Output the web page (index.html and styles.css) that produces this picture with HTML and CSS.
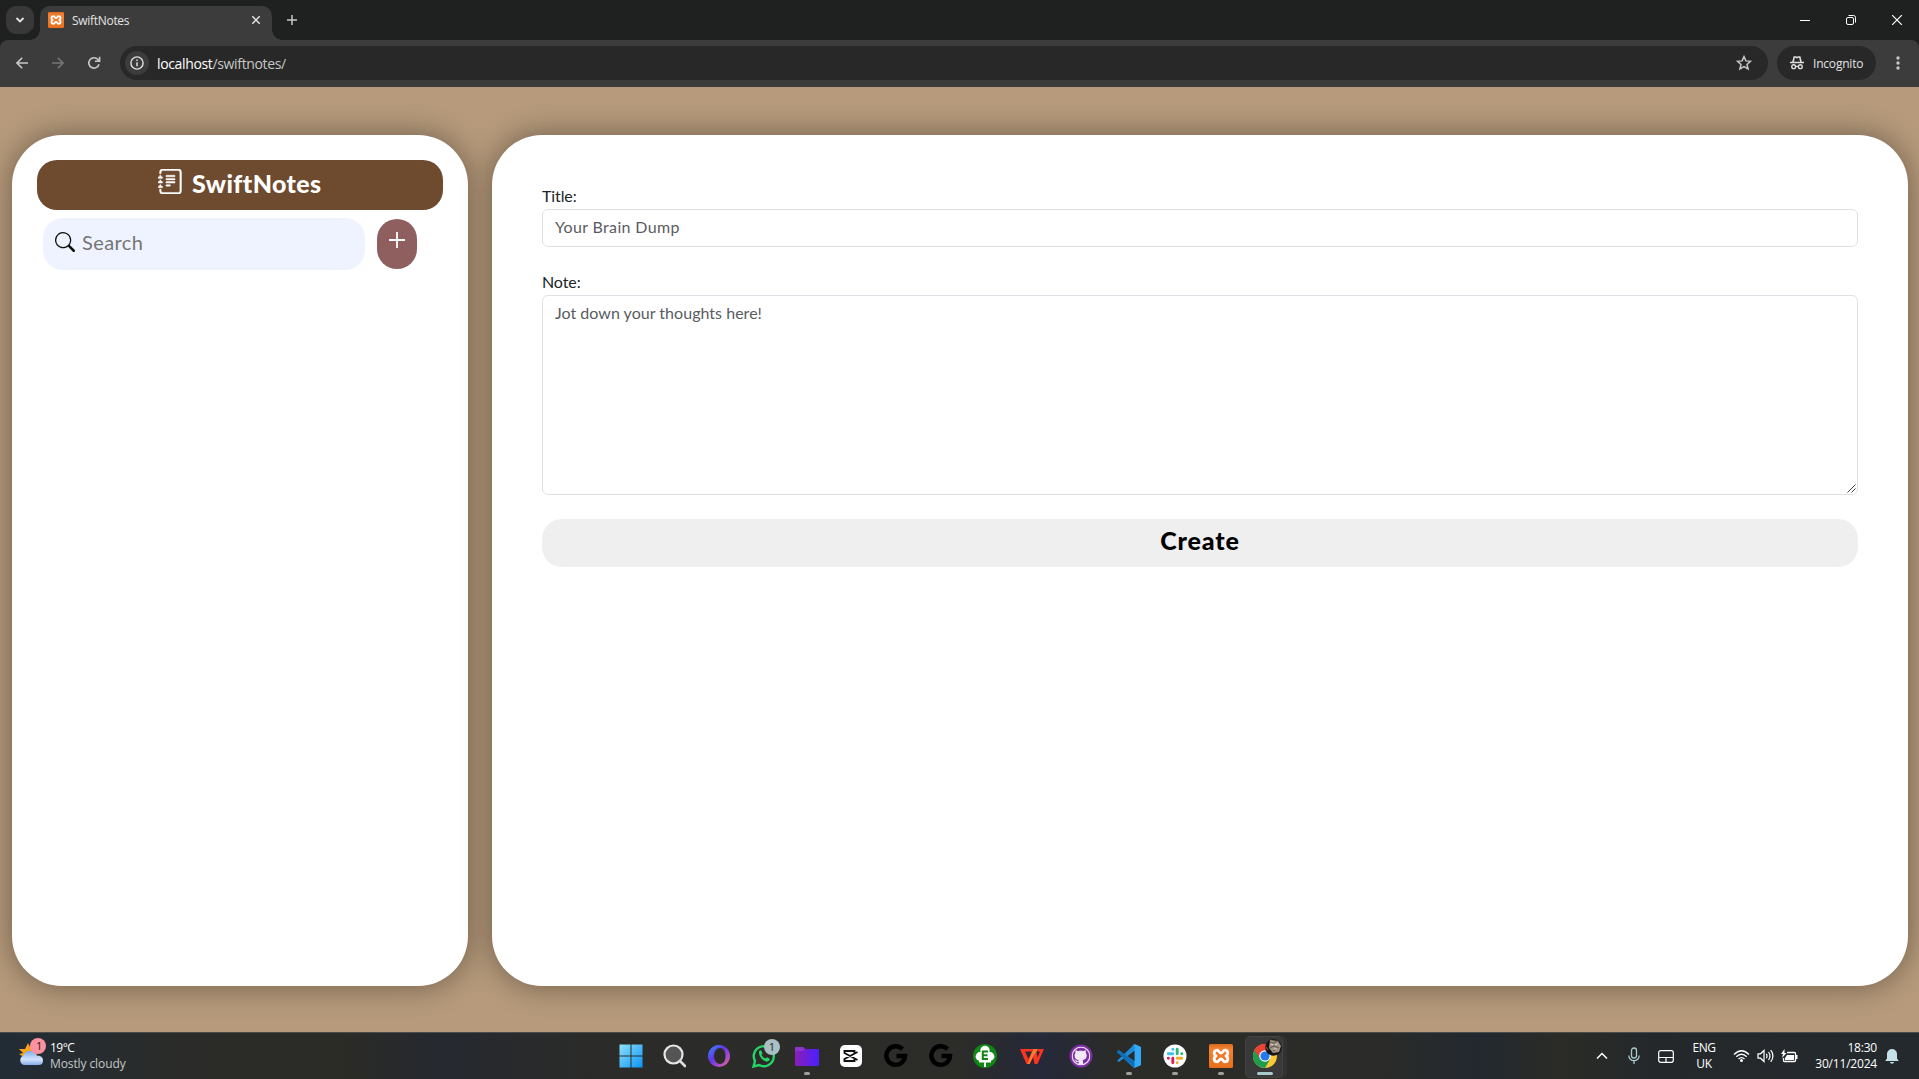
FILE: index.html
```html
<!DOCTYPE html>
<html lang="en">
<head>
<meta charset="utf-8">
<title>SwiftNotes</title>
<link rel="stylesheet" href="styles.css">
</head>
<body>
<svg width="0" height="0" class="defs">
  <defs>
    <linearGradient id="orange" x1="0" y1="0" x2="0" y2="1"><stop offset="0" stop-color="#d9691f"/><stop offset=".2" stop-color="#f58233"/><stop offset="1" stop-color="#e86f1c"/></linearGradient>
    <linearGradient id="win" x1="0" y1="0" x2="1" y2="1"><stop offset="0" stop-color="#8fe0fb"/><stop offset="1" stop-color="#0a94f5"/></linearGradient>
    <linearGradient id="opera" x1="0" y1="0" x2="1" y2="1"><stop offset="0" stop-color="#2d9cff"/><stop offset=".4" stop-color="#6236e8"/><stop offset=".7" stop-color="#a54bd0"/><stop offset="1" stop-color="#ff6a6a"/></linearGradient>
    <linearGradient id="folder" x1="0" y1="0" x2="1" y2="0"><stop offset="0" stop-color="#8a1fb5"/><stop offset="1" stop-color="#4b1fff"/></linearGradient>
    <linearGradient id="cloud" x1="0" y1="0" x2="0" y2="1"><stop offset="0" stop-color="#7ea9ee"/><stop offset=".6" stop-color="#d3e4fc"/><stop offset="1" stop-color="#86aceb"/></linearGradient>
    <symbol id="xampp" viewBox="0 0 24 24"><rect width="24" height="24" rx="1.500" fill="url(#orange)"/><path d="M8.200 6.200C9.800 6.200 10 9 12 9s2.200-2.800 3.800-2.800c3.600 0 3.900 4.300 1.200 5.800 2.700 1.500 2.400 5.800-1.200 5.800C14.200 17.800 14 15 12 15s-2.200 2.800-3.800 2.800c-3.600 0-3.900-4.300-1.200-5.800-2.700-1.500-2.400-5.800 1.200-5.800z" fill="none" stroke="#fff" stroke-width="2.800" stroke-linejoin="round"/></symbol>
    <symbol id="gmark" viewBox="0 0 24 24"><path d="M18.500 5.200A9.300 9.300 0 1 0 21 12H12.500" fill="none" stroke="#000" stroke-width="4.400"/></symbol>
  </defs>
</svg>

<header class="tabs">
  <span class="tab-search"><svg width="10" height="10" viewBox="0 0 10 10"><path d="M1.500 3l3.500 3.500L8.500 3" fill="none" stroke="#e3e3e3" stroke-width="1.800"/></svg></span>
  <div class="tab">
    <svg width="16" height="16"><use href="#xampp"/></svg>
    <span class="tab-title">SwiftNotes</span>
    <svg class="tab-close" width="10" height="10" viewBox="0 0 10 10"><path d="M1.300 1.300l7.400 7.400M8.700 1.300L1.300 8.700" stroke="#e3e3e3" stroke-width="1.500"/></svg>
  </div>
  <svg class="tab-new" width="12" height="12" viewBox="0 0 12 12"><path d="M6 1v10M1 6h10" stroke="#c7c7c7" stroke-width="1.500"/></svg>
  <div class="window-buttons">
    <svg width="10" height="12" viewBox="0 0 10 12"><path d="M0 5.500h10" stroke="#fff"/></svg>
    <svg width="10" height="10" viewBox="0 0 10 10"><path d="M2.500.5H7.500Q9.500.5 9.500 2.500V7.500" fill="none" stroke="#fff"/><rect x=".5" y="2.500" width="7" height="7" rx="1.500" fill="none" stroke="#fff"/></svg>
    <svg width="10" height="10" viewBox="0 0 10 10"><path d="M0 0l10 10M10 0L0 10" stroke="#fff" stroke-width="1.200"/></svg>
  </div>
</header>

<div class="toolbar-back">
<nav class="toolbar">
  <svg class="nav-back" width="12" height="12" viewBox="0 0 12 12"><path d="M12 6H1.200M6.200 .8L1 6l5.200 5.200" fill="none" stroke="#c7c7c7" stroke-width="1.600"/></svg>
  <svg class="nav-forward" width="12" height="12" viewBox="0 0 12 12"><path d="M0 6h10.800M5.800 .8L11 6l-5.200 5.200" fill="none" stroke="#757575" stroke-width="1.600"/></svg>
  <svg class="nav-reload" width="14" height="14" viewBox="0 0 14 14"><path d="M12 8.200A5.200 5.200 0 1 1 11 3.600L12.500 5.200M12.600 .8V5.300H8" fill="none" stroke="#c7c7c7" stroke-width="1.600"/></svg>
  <div class="address">
    <span class="site-info"><svg width="14" height="14" viewBox="0 0 14 14"><circle cx="7" cy="7" r="6.100" fill="none" stroke="#dedede" stroke-width="1.400"/><path d="M7 6.200v4.100M7 3.500v1.600" stroke="#dedede" stroke-width="1.500"/></svg></span>
    <span class="url">localhost<span class="path">/swiftnotes/</span></span>
    <svg class="star" width="16" height="16" viewBox="0 0 16 16"><path d="M8 1.600l1.900 4.300 4.700.4-3.600 3.100 1.100 4.600L8 11.600 3.900 14 5 9.400 1.400 6.300l4.700-.4z" fill="none" stroke="#c7c7c7" stroke-width="1.500"/></svg>
  </div>
  <div class="incognito">
    <svg width="14" height="14" viewBox="0 0 14 14"><path d="M3 6L4.200 1h1.600l1.200.6L8.200 1h1.600L11 6M0 6.500h14" fill="none" stroke="#dedede" stroke-width="1.600"/><circle cx="3.700" cy="10.700" r="1.900" fill="none" stroke="#dedede" stroke-width="1.400"/><circle cx="10.300" cy="10.700" r="1.900" fill="none" stroke="#dedede" stroke-width="1.400"/><path d="M5.600 10.400h2.800" stroke="#dedede" stroke-width="1.200"/></svg>
    <span>Incognito</span>
  </div>
  <svg class="menu" width="4" height="14" viewBox="0 0 4 14"><g fill="#c7c7c7"><circle cx="2" cy="2" r="1.700"/><circle cx="2" cy="7" r="1.700"/><circle cx="2" cy="12" r="1.700"/></g></svg>
</nav>
</div>

<main class="page">
  <aside class="panel sidebar">
    <h1 class="brand">
      <svg width="25" height="25" viewBox="0 0 16 16" fill="#fff"><path d="M5 10.500a.5.5 0 0 1 .5-.5h2a.5.5 0 0 1 0 1h-2a.5.5 0 0 1-.5-.5m0-2a.5.5 0 0 1 .5-.5h5a.5.5 0 0 1 0 1h-5a.5.5 0 0 1-.5-.5m0-2a.5.5 0 0 1 .5-.5h5a.5.5 0 0 1 0 1h-5a.5.5 0 0 1-.5-.5m0-2a.5.5 0 0 1 .5-.5h5a.5.5 0 0 1 0 1h-5a.5.5 0 0 1-.5-.5" stroke="#fff" stroke-width=".3"/><path d="M3 0h10a2 2 0 0 1 2 2v12a2 2 0 0 1-2 2H3a2 2 0 0 1-2-2v-1h1v1a1 1 0 0 0 1 1h10a1 1 0 0 0 1-1V2a1 1 0 0 0-1-1H3a1 1 0 0 0-1 1v1H1V2a2 2 0 0 1 2-2" stroke="#fff" stroke-width=".3"/><path d="M1 5v-.5a.5.5 0 0 1 1 0V5h.5a.5.5 0 0 1 0 1h-2a.5.5 0 0 1 0-1zm0 3v-.5a.5.5 0 0 1 1 0V8h.5a.5.5 0 0 1 0 1h-2a.5.5 0 0 1 0-1zm0 3v-.5a.5.5 0 0 1 1 0v.5h.5a.5.5 0 0 1 0 1h-2a.5.5 0 0 1 0-1z" stroke="#fff" stroke-width=".3"/></svg>
      <span>SwiftNotes</span>
    </h1>
    <div class="search-row">
      <div class="search">
        <svg width="20" height="20" viewBox="0 0 16 16" fill="#111"><path d="M11.742 10.344a6.500 6.500 0 1 0-1.397 1.398h-.001q.044.060.098.115l3.850 3.850a1 1 0 0 0 1.415-1.414l-3.850-3.850a1 1 0 0 0-.115-.1zM12 6.500a5.500 5.500 0 1 1-11 0 5.500 5.500 0 0 1 11 0"/></svg>
        <span>Search</span>
      </div>
      <div class="add"><svg width="16" height="16" viewBox="0 0 16 16"><path d="M8 .5v15M.5 8h15" stroke="#fff" stroke-width="1.800" stroke-linecap="round"/></svg></div>
    </div>
  </aside>
  <section class="panel editor">
    <label class="label title-label">Title:</label>
    <div class="field"><span class="ph-title">Your Brain Dump</span></div>
    <label class="label note-label">Note:</label>
    <div class="field area"><span class="ph-note">Jot down your thoughts here!</span>
      <svg class="grip" width="9" height="9" viewBox="0 0 9 9"><path d="M.5 8.500l8-8M4.500 8.500l4-4" stroke="#444" stroke-width="1"/></svg>
    </div>
    <div class="create"><span>Create</span></div>
  </section>
</main>

<footer class="taskbar">
  <div class="weather">
    <svg width="30" height="30" viewBox="0 0 30 30"><path d="M10 5l2 4 5-2 2 12-10 2-8-5 4-1-4-4 6 0z" fill="#f6a21c"/><path d="M6 27a5 5 0 0 1-.5-9.500Q8 12 13 13q4 .5 5.500 4.500Q25 17.500 25 22.500 25 27 20.500 27z" fill="url(#cloud)"/><circle cx="20" cy="8" r="8" fill="#fc919f"/><text x="18" y="12.300" class="badge-text">1</text></svg>
    <div class="weather-text"><div class="temp">19°C</div><div class="cond">Mostly cloudy</div></div>
  </div>
  <div class="apps">
    <span class="app"><svg viewBox="0 0 24 24"><path d="M.5.5h11v11H.5zM12.500.5h11v11h-11zM.5 12.500h11v11H.5zM12.500 12.500h11v11h-11z" fill="url(#win)"/></svg></span>
    <span class="app"><svg viewBox="0 0 24 24"><circle cx="11.500" cy="10.500" r="9" fill="#555" stroke="#e6e6e6" stroke-width="2.200"/><path d="M18 17l5 5" stroke="#ddd" stroke-width="2.600" stroke-linecap="round"/></svg></span>
    <span class="app opera"><svg viewBox="0 0 24 24"><path d="M12 1a11 11 0 1 0 .01 0zM13 4c4 0 5.500 4 5.500 8s-1.500 8-5.500 8-6-4-6-8 2-8 6-8z" fill-rule="evenodd" fill="url(#opera)"/></svg></span>
    <span class="app"><svg viewBox="0 0 24 24"><path d="M1.500 22.500L3 17A10 10 0 1 1 7 21z" fill="none" stroke="#25d366" stroke-width="2.400"/><path d="M7 7.500q1.500-2 2.500-.5l1 2.500-1 1.500q1.500 2.500 4 3.500l1.500-1.200 2.700 1.400q.5 2.500-3 3C11 17 6.500 12.500 7 7.500z" fill="#25d366"/></svg><b class="badge">1</b></span>
    <span class="app run"><svg viewBox="0 0 24 24"><path d="M0 4q0-1 1-1h7l2 2h13q1 0 1 1v15q0 1-1 1H1q-1 0-1-1z" fill="url(#folder)"/><path d="M0 6V4q0-1 1-1h7l2 2-2 2H0z" fill="#8e35cc"/></svg></span>
    <span class="app"><svg viewBox="0 0 24 24"><rect x="1" y="1" width="22" height="22" rx="5" fill="#fff"/><path d="M18.500 8l-13 7v2h10v-2M18.500 16l-13-7V7h10v2" fill="none" stroke="#111" stroke-width="1.900"/></svg></span>
    <span class="app g"><svg><use href="#gmark"/></svg></span>
    <span class="app g"><svg><use href="#gmark"/></svg></span>
    <span class="app tree"><svg viewBox="0 0 24 24"><circle cx="12" cy="12" r="12" fill="#118516"/><g fill="#fff"><circle cx="12" cy="6.500" r="4.700"/><circle cx="7" cy="12.500" r="4.400"/><circle cx="17" cy="12.500" r="4.400"/><path d="M6 12h12v6.500h-5V23h-2v-4.500H6z"/></g><path d="M15 7.500H9.800v7.500H15M9.800 11.200h4.700" fill="none" stroke="#118516" stroke-width="2"/></svg></span>
    <span class="app"><svg viewBox="0 0 24 24"><path d="M0 5h14.500L13 7.500H5L8.500 15 13.200 5H18L16.500 8l1 5.500L20 7.500h-2.500L18.500 5H24l-6.500 15h-3l-1.500-7-3.500 7h-3z" fill="#fb3421" fill-rule="evenodd"/><path d="M13.200 5H18l-5 8-3.500 7H7.500z" fill="#ff7a2e"/></svg></span>
    <span class="app"><svg viewBox="0 0 24 24"><circle cx="12" cy="12" r="11.500" fill="#7b2fa0"/><svg x="2.500" y="2.500" width="19" height="19" viewBox="0 0 16 16"><path d="M8 0C3.580 0 0 3.580 0 8c0 3.540 2.290 6.530 5.470 7.590.4.070.55-.17.55-.38 0-.19-.01-.82-.01-1.490-2.010.37-2.530-.49-2.690-.94-.09-.23-.48-.94-.82-1.130-.28-.15-.68-.52-.01-.53.63-.01 1.080.58 1.230.82.72 1.210 1.870.87 2.330.66.07-.52.28-.87.51-1.070-1.780-.2-3.640-.89-3.640-3.950 0-.87.31-1.590.82-2.150-.08-.2-.36-1.020.08-2.120 0 0 .67-.21 2.200.82.64-.18 1.320-.27 2-.27s1.360.09 2 .27c1.530-1.040 2.200-.82 2.200-.82.44 1.100.16 1.920.08 2.120.51.56.82 1.270.82 2.150 0 3.070-1.870 3.750-3.650 3.950.29.25.54.73.54 1.480 0 1.070-.01 1.930-.01 2.200 0 .21.15.46.55.38A8.010 8.010 0 0 0 16 8c0-4.420-3.580-8-8-8" fill="none" stroke="#f1e8f5" stroke-width="0"/><circle cx="8" cy="8" r="7.400" fill="none" stroke="#eadcf1" stroke-width="1"/><path d="M6 15.200v-2.300c-2 .4-2.500-.5-2.700-1-.2-.4-.5-.8-.8-1 1.500-.3 1.700 1.200 2.800 1.300.4 0 .7-.3.9-.9-1.800-.2-3.600-.9-3.600-4 0-.8.300-1.500.8-2.100-.1-.3-.3-1.100.1-2.100 0 0 .7-.2 2.200.8 1.300-.3 2.700-.3 4 0 1.500-1 2.200-.8 2.200-.8.4 1 .2 1.800.1 2.100.5.600.8 1.300.8 2.100 0 3.100-1.900 3.800-3.600 4 .3.200.5.700.5 1.500v2.400z" fill="#f1e8f5"/></svg></svg></span>
    <span class="app run"><svg viewBox="0 0 24 24"><path d="M17 0l7 3v18l-7 3L6.500 14.500 2 18 0 16.700 13.500 4z" fill="#1f8ad6"/><path d="M0 7.300L2 6l16 12v6L0 8.500z" fill="#0d6fb8"/><path d="M17.500 0L24 3v18l-6.500 3z" fill="#32a9f4"/><path d="M17.500 6.700v10.600L10.500 12z" fill="#2a2c2a"/></svg></span>
    <span class="app run"><svg viewBox="0 0 24 24"><circle cx="12" cy="12" r="11.500" fill="#fff"/><g fill="none" stroke-width="2.900" stroke-linecap="round"><path d="M5.200 9.700h4.600M9.800 5.300v.1" stroke="#36c5f0"/><path d="M14.200 5.200v4.600M18.700 9.800h.1" stroke="#2eb67d"/><path d="M9.800 14.200v4.600M5.300 14.200h.1" stroke="#e01e5a"/><path d="M14.200 14.300h4.600M14.200 18.700v.1" stroke="#ecb22e"/></g></svg></span>
    <span class="app run"><svg><use href="#xampp"/></svg></span>
    <span class="app active"><svg viewBox="0 0 24 24"><circle cx="12" cy="12" r="12" fill="#fcc934"/><path d="M12 12L1.600 6A12 12 0 0 1 22.400 6z" fill="#ea4335"/><path d="M1.600 6A12 12 0 0 0 12 24L17.200 15 12 12z" fill="#1e9e4c"/><path d="M12 6.500h10.700A12 12 0 0 0 1.600 6L6.800 15z" fill="#ea4335"/><circle cx="12" cy="12" r="5.800" fill="#fff"/><circle cx="12" cy="12" r="4.600" fill="#2379f0"/></svg>
      <svg class="avatar" width="17" height="17" viewBox="0 0 17 17"><circle cx="8.500" cy="8.500" r="8.300" fill="#171412"/><path d="M5 1l8 1 3 5-2 6-6 1-4-5z" fill="#a19589"/><path d="M5 3l4 1 3-2M5 9l4-2 5 2M8 12l4-2M1 8l2 3" stroke="#6b5c52" fill="none" stroke-width="1.200"/><path d="M6 5l2 1M10 6l2-1M9 10h3" stroke="#e5dcd1"/></svg>
    </span>
  </div>
  <div class="tray">
    <svg width="12" height="12" viewBox="0 0 12 12"><path d="M1 8.500l5-5 5 5" fill="none" stroke="#fff" stroke-width="1.500"/></svg>
    <svg class="mic" width="12" height="18" viewBox="0 0 12 18"><rect x="3.500" y="1" width="5" height="10" rx="2.500" fill="none" stroke="#a9c9cc" stroke-width="1.300"/><path d="M.8 8.500a5.200 5.200 0 0 0 10.400 0M6 14v3" fill="none" stroke="#a9c9cc" stroke-width="1.300"/></svg>
    <svg class="pad" width="16" height="13" viewBox="0 0 16 13"><rect x=".7" y=".7" width="14.600" height="11.600" rx="2" fill="none" stroke="#fff" stroke-width="1.200"/><path d="M1 7.500h14M8 7.500V12" stroke="#fff" stroke-width="1.200"/></svg>
    <div class="lang"><div>ENG</div><div>UK</div></div>
    <svg class="wifi" width="17" height="14" viewBox="0 0 17 14"><path d="M1 5.500q7.500-7.500 15 0M3.300 7.800q5.200-5 10.400 0M5.500 10q3-2.700 6 0" fill="none" stroke="#fff" stroke-width="1.300"/><circle cx="8.500" cy="11.500" r="1.500" fill="#fff"/></svg>
    <svg class="sound" width="17" height="14" viewBox="0 0 17 14"><path d="M1 4.800h2.500L7 1.500v11L3.500 9.200H1z" fill="none" stroke="#fff" stroke-width="1.200"/><path d="M9.300 4.800q1.500 2.200 0 4.400M11.500 3q3 4 0 8M13.700 1.200q4.500 5.800 0 11.600" fill="none" stroke="#fff" stroke-width="1.200"/></svg>
    <svg class="battery" width="17" height="14" viewBox="0 0 17 14"><path d="M6 3.500h7.500q1 0 1 1v7q0 1-1 1h-10q-1 0-1-1V9" fill="none" stroke="#fff" stroke-width="1.300"/><path d="M6 6h7v5H4V9zM15 6h1.500v4H15zM3.500 0L0 5h2L1 9l4.500-5h-2z" fill="#fff"/></svg>
    <div class="clock"><div class="time">18:30</div><div class="date">30/11/2024</div></div>
    <svg class="bell" width="14" height="16" viewBox="0 0 14 16"><path d="M2 10.500V6a5 5 0 0 1 10 0v4.500l1.500 2v.5H.5v-.5zM4.800 14h4.400Q8.500 15.700 7 15.700T4.800 14z" fill="#c4e3e8"/></svg>
  </div>
</footer>
</body>
</html>
```
FILE: styles.css
```css
* { box-sizing: border-box; }
body {
  margin: 0;
  width: 1919px;
  height: 1079px;
  overflow: hidden;
  display: flex;
  flex-direction: column;
  background: #b69a7b;
  font-family: "Open Sans", "Noto Sans", sans-serif;
  color: #fff;
}
svg { display: block; flex: none; }
.defs { position: absolute; }

/* browser frame */
.tabs {
  height: 40px;
  flex: none;
  display: flex;
  align-items: flex-start;
  background: #1f2120;
  padding-left: 6px;
}
.tab-search {
  width: 28px;
  height: 28px;
  margin-top: 6px;
  border-radius: 10px;
  background: #383838;
  display: grid;
  place-items: center;
}
.tab {
  width: 232px;
  height: 34px;
  margin: 6px 0 0 6px;
  padding: 0 11px 6px 8px;
  border-radius: 10px 10px 0 0;
  background: #3c3c3c;
  display: flex;
  align-items: center;
  position: relative;
}
.tab::before, .tab::after {
  content: "";
  position: absolute;
  bottom: 0;
  width: 10px;
  height: 10px;
}
.tab::before { left: -10px; background: radial-gradient(circle at 0 0, #1f2120 9.5px, #3c3c3c 10px); }
.tab::after { right: -10px; background: radial-gradient(circle at 100% 0, #1f2120 9.5px, #3c3c3c 10px); }
.tab-title { margin-left: 8px; font-size: 12px; letter-spacing: -.3px; color: #e3e3e3; }
.tab-close { margin-left: auto; }
.tab-new { margin: 14px 0 0 14px; }
.window-buttons { margin: 15px 17px 0 auto; display: flex; gap: 36px; }
.toolbar-back { flex: none; background: #1f2120; }
.toolbar {
  height: 47px;
  display: flex;
  align-items: center;
  padding: 0 19px 1px 16px;
  border-radius: 8px 8px 0 0;
  background: #3c3c3c;
}
.nav-forward { margin-left: 24px; }
.nav-reload { margin-left: 23px; }
.address {
  flex: 1;
  height: 34px;
  margin-left: 19px;
  padding: 0 16px 0 5px;
  border-radius: 17px;
  background: #282828;
  display: flex;
  align-items: center;
}
.site-info {
  width: 24px;
  height: 24px;
  border-radius: 50%;
  background: #3c3c3c;
  display: grid;
  place-items: center;
}
.url { margin-left: 8px; font-size: 14px; letter-spacing: -.35px; color: #fff; }
.path { color: #c7c7c7; }
.star { margin-left: auto; }
.incognito {
  width: 99px;
  height: 34px;
  margin: 0 20px 0 9px;
  padding-left: 13px;
  border-radius: 17px;
  background: #282828;
  display: flex;
  align-items: center;
  gap: 9px;
  font-size: 12px;
  letter-spacing: -.2px;
  color: #e3e3e3;
}

/* notes app */
.page {
  height: 945px;
  flex: none;
  display: flex;
  gap: 24px;
  padding: 48px 11px 46px 12px;
  font-family: Lato, sans-serif;
  background: #b69a7b;
}
.panel { background: #fff; border-radius: 50px; box-shadow: 0 0 30px rgba(0, 0, 0, .4); }
.sidebar { width: 456px; padding: 25px; }
.brand {
  margin: 0;
  height: 50px;
  border-radius: 20px;
  background: #6e4a2f;
  display: flex;
  padding: 9px 0 0 121px;
  gap: 9px;
  font-size: 25px;
  letter-spacing: .4px;
  line-height: 28px;
  font-weight: 900;
}
.search-row { display: flex; gap: 12px; padding: 8px 0 0 6px; }
.search {
  width: 322px;
  height: 52px;
  border-radius: 20px;
  background: #eff3ff;
  display: flex;
  gap: 7px;
  padding: 14px 0 0 12px;
  font-size: 20px;
  letter-spacing: .4px;
  line-height: 21px;
  color: #757575;
}
.add {
  width: 40px;
  height: 50px;
  margin-top: 1px;
  padding: 13px 0 0 12px;
  border-radius: 20px;
  background: #8f5f60;
}
.editor { flex: 1; padding: 50px 50px 0; }
.label { display: block; height: 24px; font-size: 16px; letter-spacing: -.1px; line-height: 21px; color: #212529; }
.field {
  height: 38px;
  border: 1px solid #dee2e6;
  border-radius: 6px;
  padding: 6px 12px;
  font-size: 16px;
  line-height: 22px;
  color: #595c5f;
  position: relative;
}
.note-label { margin-top: 24px; }
.area { height: 200px; }
.grip { position: absolute; right: 1px; bottom: 1px; }
.ph-title { letter-spacing: .35px; }
.ph-note { letter-spacing: .03px; }
.create {
  height: 48px;
  margin-top: 24px;
  border-radius: 20px;
  background: #efefef;
  color: #000;
  text-align: center;
  font-size: 25px;
  letter-spacing: .9px;
  line-height: 43px;
  font-weight: 900;
}

/* taskbar */
.taskbar {
  height: 47px;
  flex: none;
  display: flex;
  border-top: 1px solid #4a4c4c;
  background: linear-gradient(90deg, #222c35 0, #2b2c29 180px, #2b2c26 340px, #25282f 440px, #2b2c29 600px, #2c2c29 960px, #25293a 1040px, #2b2c27 1120px, #2b2c29 1380px, #22282f 1480px, #2b2c26 1560px, #24282b 1650px, #24292d 1919px);
}
.weather { width: 619px; padding: 5px 0 0 18px; display: flex; gap: 2px; }
.badge-text { font-size: 11px; fill: #222; }
.weather-text { font-size: 12px; line-height: 16px; padding-top: 2px; }
.temp { letter-spacing: -.5px; }
.cond { color: #c5c7c8; letter-spacing: -.1px; }
.apps {
  display: grid;
  grid-template-columns: 43px 44px 46px 43px 44px 44px 45px 46px 46px 49px 48px 46px 46px 44px 24px;
  padding-top: 11px;
}
.app { position: relative; width: 24px; height: 34px; }
.app > svg:first-child { width: 24px; height: 24px; position: relative; }
.opera, .g { margin-left: 1px; }
.tree { margin-left: -1px; }
.run::after, .active::after {
  content: "";
  position: absolute;
  left: 9px;
  top: 28px;
  width: 6px;
  height: 3px;
  border-radius: 2px;
  background: #a0a0a0;
}
.active::after { left: 4px; width: 16px; background: #a9c9d0; }
.active::before {
  content: "";
  position: absolute;
  left: -8px;
  top: -8px;
  width: 36px;
  height: 40px;
  border-radius: 5px;
  background: #383938;
  border: 1px solid #424342;
  box-shadow: 4px 0 0 #313231;
}
.avatar { position: absolute; left: 12px; top: -5px; }
.badge {
  position: absolute;
  left: 12px;
  top: -5px;
  width: 16px;
  height: 16px;
  border-radius: 50%;
  background: #a9bfc5;
  color: #222;
  font: 11px/16px "Open Sans", sans-serif;
  text-align: center;
}
.tray { flex: 1; display: flex; align-items: center; padding-left: 319px; font-size: 12px; line-height: 16px; }
.mic { margin-left: 20px; }
.pad { margin-left: 18px; }
.lang { width: 40px; margin-left: 10px; text-align: center; letter-spacing: -.4px; }
.wifi { margin-left: 9px; }
.sound { margin-left: 7px; }
.battery { margin-left: 7px; }
.clock { margin-left: auto; text-align: right; letter-spacing: -.2px; }
.bell { margin: 0 20px 0 8px; }
```
